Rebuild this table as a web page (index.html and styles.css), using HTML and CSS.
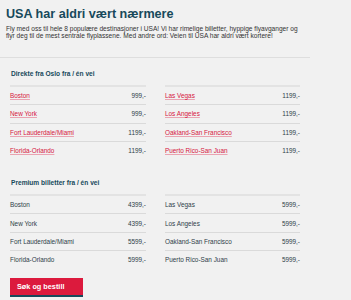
FILE: index.html
```html
<!DOCTYPE html>
<html lang="no">
<head>
<meta charset="utf-8">
<title>USA har aldri vært nærmere</title>
<link rel="stylesheet" href="styles.css">
</head>
<body>
<div class="page">
  <div class="intro">
    <h1>USA har aldri vært nærmere</h1>
    <p>Fly med oss til hele 8 populære destinasjoner i USA! Vi har rimelige billetter, hyppige flyavganger og flyr deg til de mest sentrale flyplassene. Med andre ord: Veien til USA har aldri vært kortere!</p>
  </div>

  <div class="prices">
    <h2>Direkte fra Oslo fra / én vei</h2>
    <div class="cols">
      <table>
        <tr><td><a href="#">Boston</a></td><td class="price">999,-</td></tr>
        <tr><td><a href="#">New York</a></td><td class="price">999,-</td></tr>
        <tr><td><a href="#">Fort Lauderdale/Miami</a></td><td class="price">1199,-</td></tr>
        <tr><td><a href="#">Florida-Orlando</a></td><td class="price">1199,-</td></tr>
      </table>
      <table>
        <tr><td><a href="#">Las Vegas</a></td><td class="price">1199,-</td></tr>
        <tr><td><a href="#">Los Angeles</a></td><td class="price">1199,-</td></tr>
        <tr><td><a href="#">Oakland-San Francisco</a></td><td class="price">1199,-</td></tr>
        <tr><td><a href="#">Puerto Rico-San Juan</a></td><td class="price">1199,-</td></tr>
      </table>
    </div>

    <h2 class="second">Premium billetter fra / én vei</h2>
    <div class="cols">
      <table>
        <tr><td>Boston</td><td class="price">4399,-</td></tr>
        <tr><td>New York</td><td class="price">4399,-</td></tr>
        <tr><td>Fort Lauderdale/Miami</td><td class="price">5599,-</td></tr>
        <tr><td>Florida-Orlando</td><td class="price">5999,-</td></tr>
      </table>
      <table>
        <tr><td>Las Vegas</td><td class="price">5999,-</td></tr>
        <tr><td>Los Angeles</td><td class="price">5999,-</td></tr>
        <tr><td>Oakland-San Francisco</td><td class="price">5999,-</td></tr>
        <tr><td>Puerto Rico-San Juan</td><td class="price">5999,-</td></tr>
      </table>
    </div>

    <a class="button" href="#">Søk og bestill</a>
  </div>
</div>
</body>
</html>
```

FILE: styles.css
```css
html, body { margin: 0; padding: 0; background: #f1f1f1; }
body { font-family: "Liberation Sans", Arial, sans-serif; color: #333; }

.page { width: 310px; }

.intro { padding: 7px 0 0 6px; border-bottom: 1px solid #dedede; height: 50px; }
h1 { margin: 0; font-size: 12.6px; font-weight: bold; color: #17495b; line-height: 14px; }
p { margin: 5px 0 0 0; width: 300px; font-size: 6.6px; line-height: 6.6px; color: #333; }

.prices { padding: 0 10px; width: 290px; }
h2 { margin: 0; padding: 12px 0 0 1px; font-size: 6.6px; line-height: 8px; color: #17495b; height: 15px; }
h2.second { padding-top: 20px; }

.cols { display: grid; grid-template-columns: 136px 135px; column-gap: 19px; }
table { border-collapse: collapse; border-top: 2px solid #e3e3e3; }
td { font-size: 6.4px; height: 17.3px; padding: 0; vertical-align: middle; border-bottom: 1px solid #dadada; color: #2e3e48; }
tr:last-child td { border-bottom: none; }
td.price { text-align: right; }
td a { color: #d6163d; text-decoration: underline; text-decoration-color: #eaa3b1; }

.button { display: block; margin-top: 10px; width: 66px; height: 17px; line-height: 17px; padding-left: 7px;
  background: #dc1a3d; color: #fff; font-weight: bold; font-size: 7.3px; text-decoration: none;
  border-bottom: 2px solid #17495b; }
```
